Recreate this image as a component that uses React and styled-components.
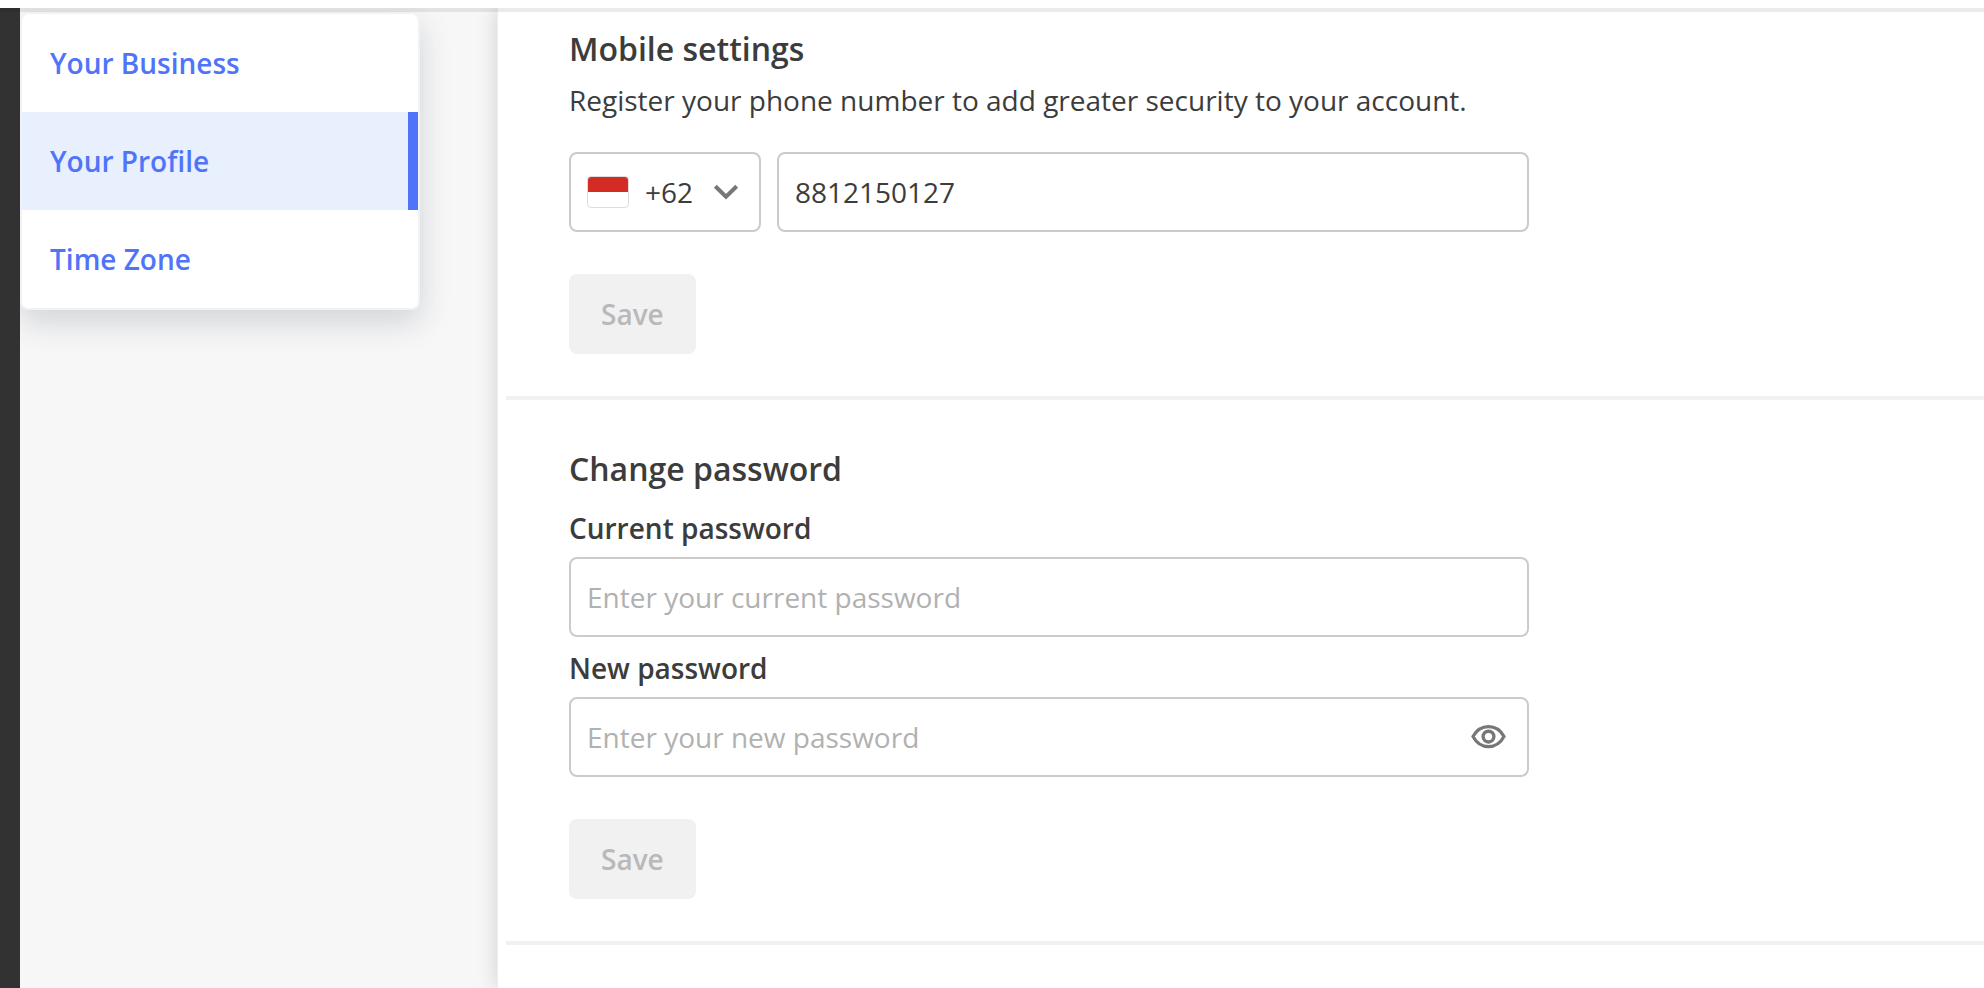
import React, { useState } from 'react';
import styled, { createGlobalStyle } from 'styled-components';

const GlobalStyle = createGlobalStyle`
  *, *::before, *::after {
    box-sizing: border-box;
  }

  body {
    margin: 0;
    background: #fff;
    color: #3c3c3c;
    font-family: 'Open Sans', 'Noto Sans', sans-serif;
    font-size: 28px;
    line-height: 40px;
  }
`;

const Page = styled.div`
  display: flex;
  flex-direction: column;
  min-height: 100vh;
`;

const TopBar = styled.header`
  position: relative;
  z-index: 2;
  height: 8px;
  background: #fff;
  box-shadow: 0 4px 0 rgba(0, 0, 0, 0.08);
`;

const Main = styled.div`
  display: flex;
  flex: 1;
`;

const Rail = styled.div`
  position: relative;
  width: 20px;
  background: #323232;
`;

const Sidebar = styled.aside`
  width: 477px;
  padding: 5px 77px 0 0;
  background: #f7f7f7;
`;

const Menu = styled.nav`
  border: 2px solid #f1f2f3;
  border-top-width: 1px;
  border-radius: 8px;
  background: #fff;
  background-clip: padding-box;
  box-shadow: 0 12px 32px rgba(40, 50, 70, 0.18);
`;

const MenuLink = styled.a`
  display: flex;
  align-items: center;
  height: 98px;
  padding-left: 28px;
  border-right: 10px solid ${props => (props.$active ? '#5074f9' : 'transparent')};
  background: ${props => (props.$active ? '#e8effd' : 'transparent')};
  color: #5074f9;
  font-weight: 600;
  text-decoration: none;
`;

const Content = styled.main`
  position: relative;
  flex: 1;
  min-width: 0;
  padding-left: 8px;
  border-left: 1px solid #eee;
  background: #fff;
  box-shadow: 0 0 20px rgba(0, 0, 0, 0.16);
`;

const Section = styled.section`
  padding: ${props => (props.$first ? '17px' : '45px')} 63px 42px;
  border-bottom: 4px solid #f1f1f1;
`;

const Form = styled.form`
  max-width: 960px;
`;

const Heading = styled.h2`
  margin: 0;
  font-size: 32px;
  font-weight: 600;
  line-height: 48px;
`;

const Description = styled.p`
  margin: 7px 0 32px;
`;

const PhoneRow = styled.div`
  display: flex;
  gap: 16px;
`;

const FieldBox = styled.div`
  display: flex;
  align-items: center;
  height: 80px;
  padding: 0 16px;
  border: 2px solid #cbcbcb;
  border-radius: 8px;
  background: #fff;
`;

const CountryBox = styled(FieldBox)`
  position: relative;
  width: 192px;
`;

const PhoneBox = styled(FieldBox)`
  flex: 1;
`;

const Flag = styled.span`
  flex: none;
  width: 42px;
  height: 32px;
  border: 1px solid #ddd;
  border-radius: 4px;
  background: linear-gradient(#d52b25 50%, #fff 50%);
`;

const CountrySelect = styled.select`
  flex: 1;
  min-width: 0;
  height: 76px;
  padding: 0 0 0 16px;
  border: 0;
  outline: 0;
  appearance: none;
  background: transparent;
  color: inherit;
  font: inherit;
`;

const Chevron = styled.svg`
  position: absolute;
  right: 20px;
  pointer-events: none;
`;

const TextInput = styled.input`
  flex: 1;
  min-width: 0;
  height: 76px;
  padding: 0;
  border: 0;
  outline: 0;
  background: transparent;
  color: inherit;
  font: inherit;

  &::placeholder {
    color: #b1b1b1;
    opacity: 1;
  }
`;

const Label = styled.label`
  display: block;
  margin: ${props => (props.$first ? '15px' : '11px')} 0 9px;
  font-weight: 600;
`;

const EyeButton = styled.button`
  display: flex;
  padding: 0 4px 0 0;
  border: 0;
  background: transparent;
  cursor: pointer;
`;

const SaveButton = styled.button`
  display: block;
  height: 80px;
  margin-top: 42px;
  padding: 0 32px;
  border: 0;
  border-radius: 8px;
  background: #f1f1f1;
  color: #b9b9b9;
  font: inherit;
  font-weight: 600;
`;

const EyeIcon = () => (
  <svg width="36" height="24" viewBox="0 0 36 24" fill="none" stroke="#777" aria-hidden="true">
    <path d="M2 11.500C5.500 5 11 1.600 17.500 1.600s12 3.400 15.500 9.900C29.500 18 24 21.600 17.500 21.600S5.500 18 2 11.500z" strokeWidth="3.200" />
    <circle cx="17.500" cy="11.600" r="5.400" strokeWidth="3.400" />
  </svg>
);

const menuItems = ['Your Business', 'Your Profile', 'Time Zone'];

const MobileSettings = () => {
  const [phone, setPhone] = useState('8812150127');

  return (
    <Section $first>
      <Form>
        <Heading>Mobile settings</Heading>
        <Description>Register your phone number to add greater security to your account.</Description>
        <PhoneRow>
          <CountryBox>
            <Flag />
            <CountrySelect aria-label="Country code" defaultValue="+62">
              <option value="+62">+62</option>
            </CountrySelect>
            <Chevron width="26" height="18" viewBox="0 0 26 18" fill="none" stroke="#777" strokeWidth="4">
              <path d="M2.300 3.200L13 13.600L23.700 3.200" />
            </Chevron>
          </CountryBox>
          <PhoneBox>
            <TextInput
              type="tel"
              aria-label="Phone number"
              value={phone}
              onChange={e => setPhone(e.target.value)}
            />
          </PhoneBox>
        </PhoneRow>
        <SaveButton type="submit" disabled>Save</SaveButton>
      </Form>
    </Section>
  );
};

const ChangePassword = () => {
  const [visible, setVisible] = useState(false);

  return (
    <Section>
      <Form>
        <Heading>Change password</Heading>
        <Label $first htmlFor="current-password">Current password</Label>
        <FieldBox>
          <TextInput id="current-password" type="password" placeholder="Enter your current password" />
        </FieldBox>
        <Label htmlFor="new-password">New password</Label>
        <FieldBox>
          <TextInput
            id="new-password"
            type={visible ? 'text' : 'password'}
            placeholder="Enter your new password"
          />
          <EyeButton type="button" aria-label="Show password" onClick={() => setVisible(!visible)}>
            <EyeIcon />
          </EyeButton>
        </FieldBox>
        <SaveButton type="submit" disabled>Save</SaveButton>
      </Form>
    </Section>
  );
};

const App = () => (
  <Page>
    <GlobalStyle />
    <TopBar />
    <Main>
      <Rail />
      <Sidebar>
        <Menu>
          {menuItems.map(item => (
            <MenuLink key={item} href="#" $active={item === 'Your Profile'}>
              {item}
            </MenuLink>
          ))}
        </Menu>
      </Sidebar>
      <Content>
        <MobileSettings />
        <ChangePassword />
      </Content>
    </Main>
  </Page>
);

export default App;
